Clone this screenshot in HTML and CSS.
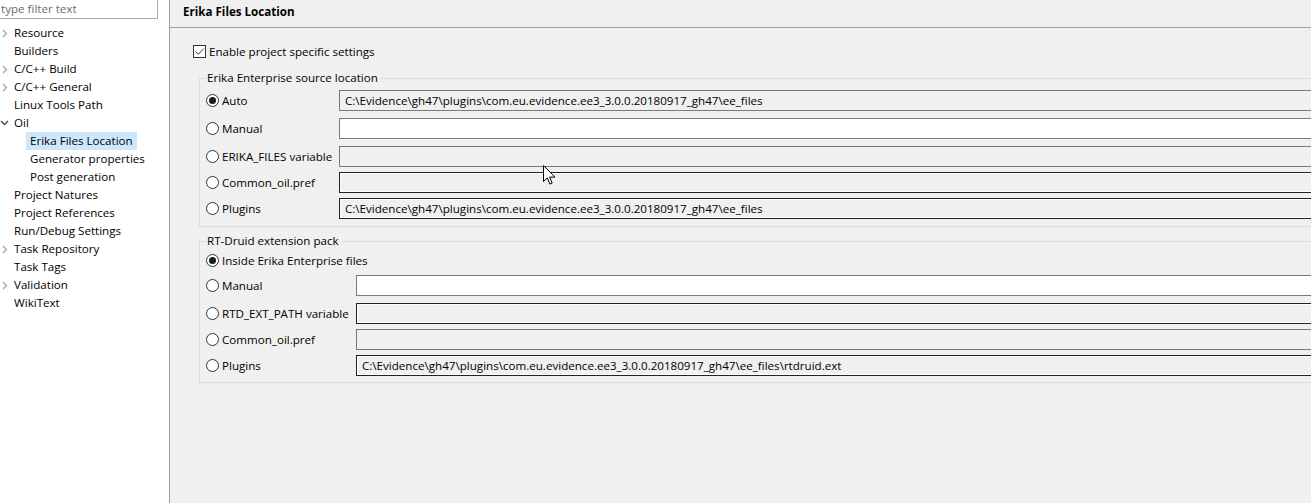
FILE: index.html
```html
<!DOCTYPE html>
<html>
<head>
<meta charset="utf-8">
<link rel="stylesheet" href="styles.css">
</head>
<body>
<aside class="sidebar">
  <div class="filter">type filter text</div>
  <ul class="tree">
    <li class="node"><span class="chev"><svg width="6" height="9" viewBox="0 0 6 9"><path d="M1 1l3.5 3.5L1 8" fill="none" stroke="#a6a6a6" stroke-width="1.3"/></svg></span>Resource</li>
    <li class="node"><span class="chev"></span>Builders</li>
    <li class="node"><span class="chev"><svg width="6" height="9" viewBox="0 0 6 9"><path d="M1 1l3.5 3.5L1 8" fill="none" stroke="#a6a6a6" stroke-width="1.3"/></svg></span>C/C++ Build</li>
    <li class="node"><span class="chev"><svg width="6" height="9" viewBox="0 0 6 9"><path d="M1 1l3.5 3.5L1 8" fill="none" stroke="#a6a6a6" stroke-width="1.3"/></svg></span>C/C++ General</li>
    <li class="node"><span class="chev"></span>Linux Tools Path</li>
    <li class="node"><span class="chev open"><svg width="9" height="6" viewBox="0 0 9 6"><path d="M1 1l3.5 3.5L8 1" fill="none" stroke="#444" stroke-width="1.3"/></svg></span>Oil</li>
    <li class="node child"><span class="sel">Erika Files Location</span></li>
    <li class="node child"><span class="lbl">Generator properties</span></li>
    <li class="node child"><span class="lbl">Post generation</span></li>
    <li class="node"><span class="chev"></span>Project Natures</li>
    <li class="node"><span class="chev"></span>Project References</li>
    <li class="node"><span class="chev"></span>Run/Debug Settings</li>
    <li class="node"><span class="chev"><svg width="6" height="9" viewBox="0 0 6 9"><path d="M1 1l3.5 3.5L1 8" fill="none" stroke="#a6a6a6" stroke-width="1.3"/></svg></span>Task Repository</li>
    <li class="node"><span class="chev"></span>Task Tags</li>
    <li class="node"><span class="chev"><svg width="6" height="9" viewBox="0 0 6 9"><path d="M1 1l3.5 3.5L1 8" fill="none" stroke="#a6a6a6" stroke-width="1.3"/></svg></span>Validation</li>
    <li class="node"><span class="chev"></span>WikiText</li>
  </ul>
</aside>
<main class="main">
  <header class="title">Erika Files Location</header>
  <div class="enable">
    <span class="check"><svg width="11" height="11" viewBox="0 0 11 11"><path d="M1.5 5.5l2.8 2.8L9.8 2.6" fill="none" stroke="#333" stroke-width="1"/></svg></span>
    <span>Enable project specific settings</span>
  </div>

  <fieldset class="group g1">
    <legend>Erika Enterprise source location</legend>
    <div class="row r1"><span class="opt"><span class="radio on"></span>Auto</span><span class="field ro">C:\Evidence\gh47\plugins\com.eu.evidence.ee3_3.0.0.20180917_gh47\ee_files</span></div>
    <div class="row r2"><span class="opt"><span class="radio"></span>Manual</span><span class="field edit"></span></div>
    <div class="row r2"><span class="opt"><span class="radio"></span>ERIKA_FILES variable</span><span class="field ro"></span></div>
    <div class="row r3"><span class="opt"><span class="radio"></span>Common_oil.pref</span><span class="field dark"></span></div>
    <div class="row r3"><span class="opt"><span class="radio"></span>Plugins</span><span class="field dark">C:\Evidence\gh47\plugins\com.eu.evidence.ee3_3.0.0.20180917_gh47\ee_files</span></div>
  </fieldset>

  <fieldset class="group g2">
    <legend>RT-Druid extension pack</legend>
    <div class="row s0"><span class="opt"><span class="radio on"></span>Inside Erika Enterprise files</span></div>
    <div class="row s1"><span class="opt"><span class="radio"></span>Manual</span><span class="field edit"></span></div>
    <div class="row s2"><span class="opt"><span class="radio"></span>RTD_EXT_PATH variable</span><span class="field dark"></span></div>
    <div class="row s3"><span class="opt"><span class="radio"></span>Common_oil.pref</span><span class="field ro"></span></div>
    <div class="row s4"><span class="opt"><span class="radio"></span>Plugins</span><span class="field dark">C:\Evidence\gh47\plugins\com.eu.evidence.ee3_3.0.0.20180917_gh47\ee_files\rtdruid.ext</span></div>
  </fieldset>

  <svg class="cursor" width="13" height="21" viewBox="0 0 13 21"><path d="M0.5 0.5v16l3.8-3.6 2.6 6.2 2.3-1-2.6-6h5.3z" fill="#fff" stroke="#000" stroke-width="1"/></svg>
</main>
</body>
</html>
```

FILE: styles.css
```css
* { box-sizing: border-box; }
html, body { margin: 0; padding: 0; }
body {
  width: 1311px;
  height: 503px;
  overflow: hidden;
  display: flex;
  font-family: "Open Sans", "Noto Sans", sans-serif;
  font-size: 11.6px;
  color: #000;
  background: #f0f0f0;
}

.sidebar {
  width: 170px;
  flex: none;
  background: #fff;
  border-right: 1px solid #a0a0a0;
}
.filter {
  width: 164px;
  height: 20px;
  margin: -1px 0 0 -6px;
  padding: 1px 0 0 6px;
  border: 1px solid #adadad;
  color: #6d6d6d;
  line-height: 16px;
}
.tree {
  list-style: none;
  margin: 5px 0 0;
  padding: 0;
}
.node {
  height: 18px;
  line-height: 18px;
  display: flex;
  align-items: center;
  white-space: nowrap;
}
.chev {
  width: 14px;
  flex: none;
  display: flex;
  align-items: center;
  padding-left: 2px;
}
.chev.open { padding-left: 0; }
.child { padding-left: 26px; }
.sel, .lbl {
  display: block;
  height: 18px;
  padding: 0 4px;
}
.sel { background: #cce8ff; }

.main {
  flex: 1;
  position: relative;
  overflow: hidden;
  background: #f0f0f0;
}
.title {
  height: 28px;
  border-bottom: 1px solid #a0a0a0;
  padding: 3px 0 0 13px;
  font-weight: bold;
  line-height: 18px;
}
.enable {
  display: flex;
  align-items: center;
  gap: 3px;
  margin: 15px 0 0 23px;
  height: 16px;
}
.check {
  flex: none;
  width: 13px;
  height: 13px;
  border: 1px solid #333;
  background: #fff;
  display: flex;
}

.group {
  margin: 11px -60px 0 29px;
  padding: 0 0 0 6px;
  border: 1px solid #dcdcdc;
  min-width: 0;
}
.group legend {
  margin-left: 0;
  padding: 0 2px 0 1px;
  line-height: 16px;
}
.g1 { padding-bottom: 7px; }
.g2 { margin-top: 6px; padding-bottom: 6px; }

.row {
  display: flex;
  align-items: center;
  height: 21px;
}
.opt {
  flex: none;
  display: flex;
  align-items: center;
  gap: 3px;
  white-space: nowrap;
}
.g1 .opt { width: 133px; }
.g2 .opt { width: 150px; }
.g1 .r1 { margin-top: 4px; }
.g1 .r2 { margin-top: 7px; }
.g1 .r3 { margin-top: 5px; }
.g2 .s0 { margin-top: 1px; }
.g2 .s1 { margin-top: 4px; }
.g2 .s2 { margin-top: 7px; }
.g2 .s3 { margin-top: 5px; }
.g2 .s4 { margin-top: 5px; }

.radio {
  flex: none;
  width: 13px;
  height: 13px;
  border: 1px solid #333;
  border-radius: 50%;
  background: #fff;
  display: flex;
  align-items: center;
  justify-content: center;
}
.radio.on::after {
  content: "";
  width: 7px;
  height: 7px;
  border-radius: 50%;
  background: #1a1a1a;
}

.field {
  flex: 1;
  height: 21px;
  border: 1px solid #7a7a7a;
  background: #f0f0f0;
  padding: 0 5px;
  line-height: 19px;
  white-space: nowrap;
  overflow: hidden;
}
.field.edit { background: #fff; }
.field.dark {
  border-color: #222;
  box-shadow: inset 0 0 0 1px #fff;
}

.cursor {
  position: absolute;
  left: 373px;
  top: 165px;
}
```
